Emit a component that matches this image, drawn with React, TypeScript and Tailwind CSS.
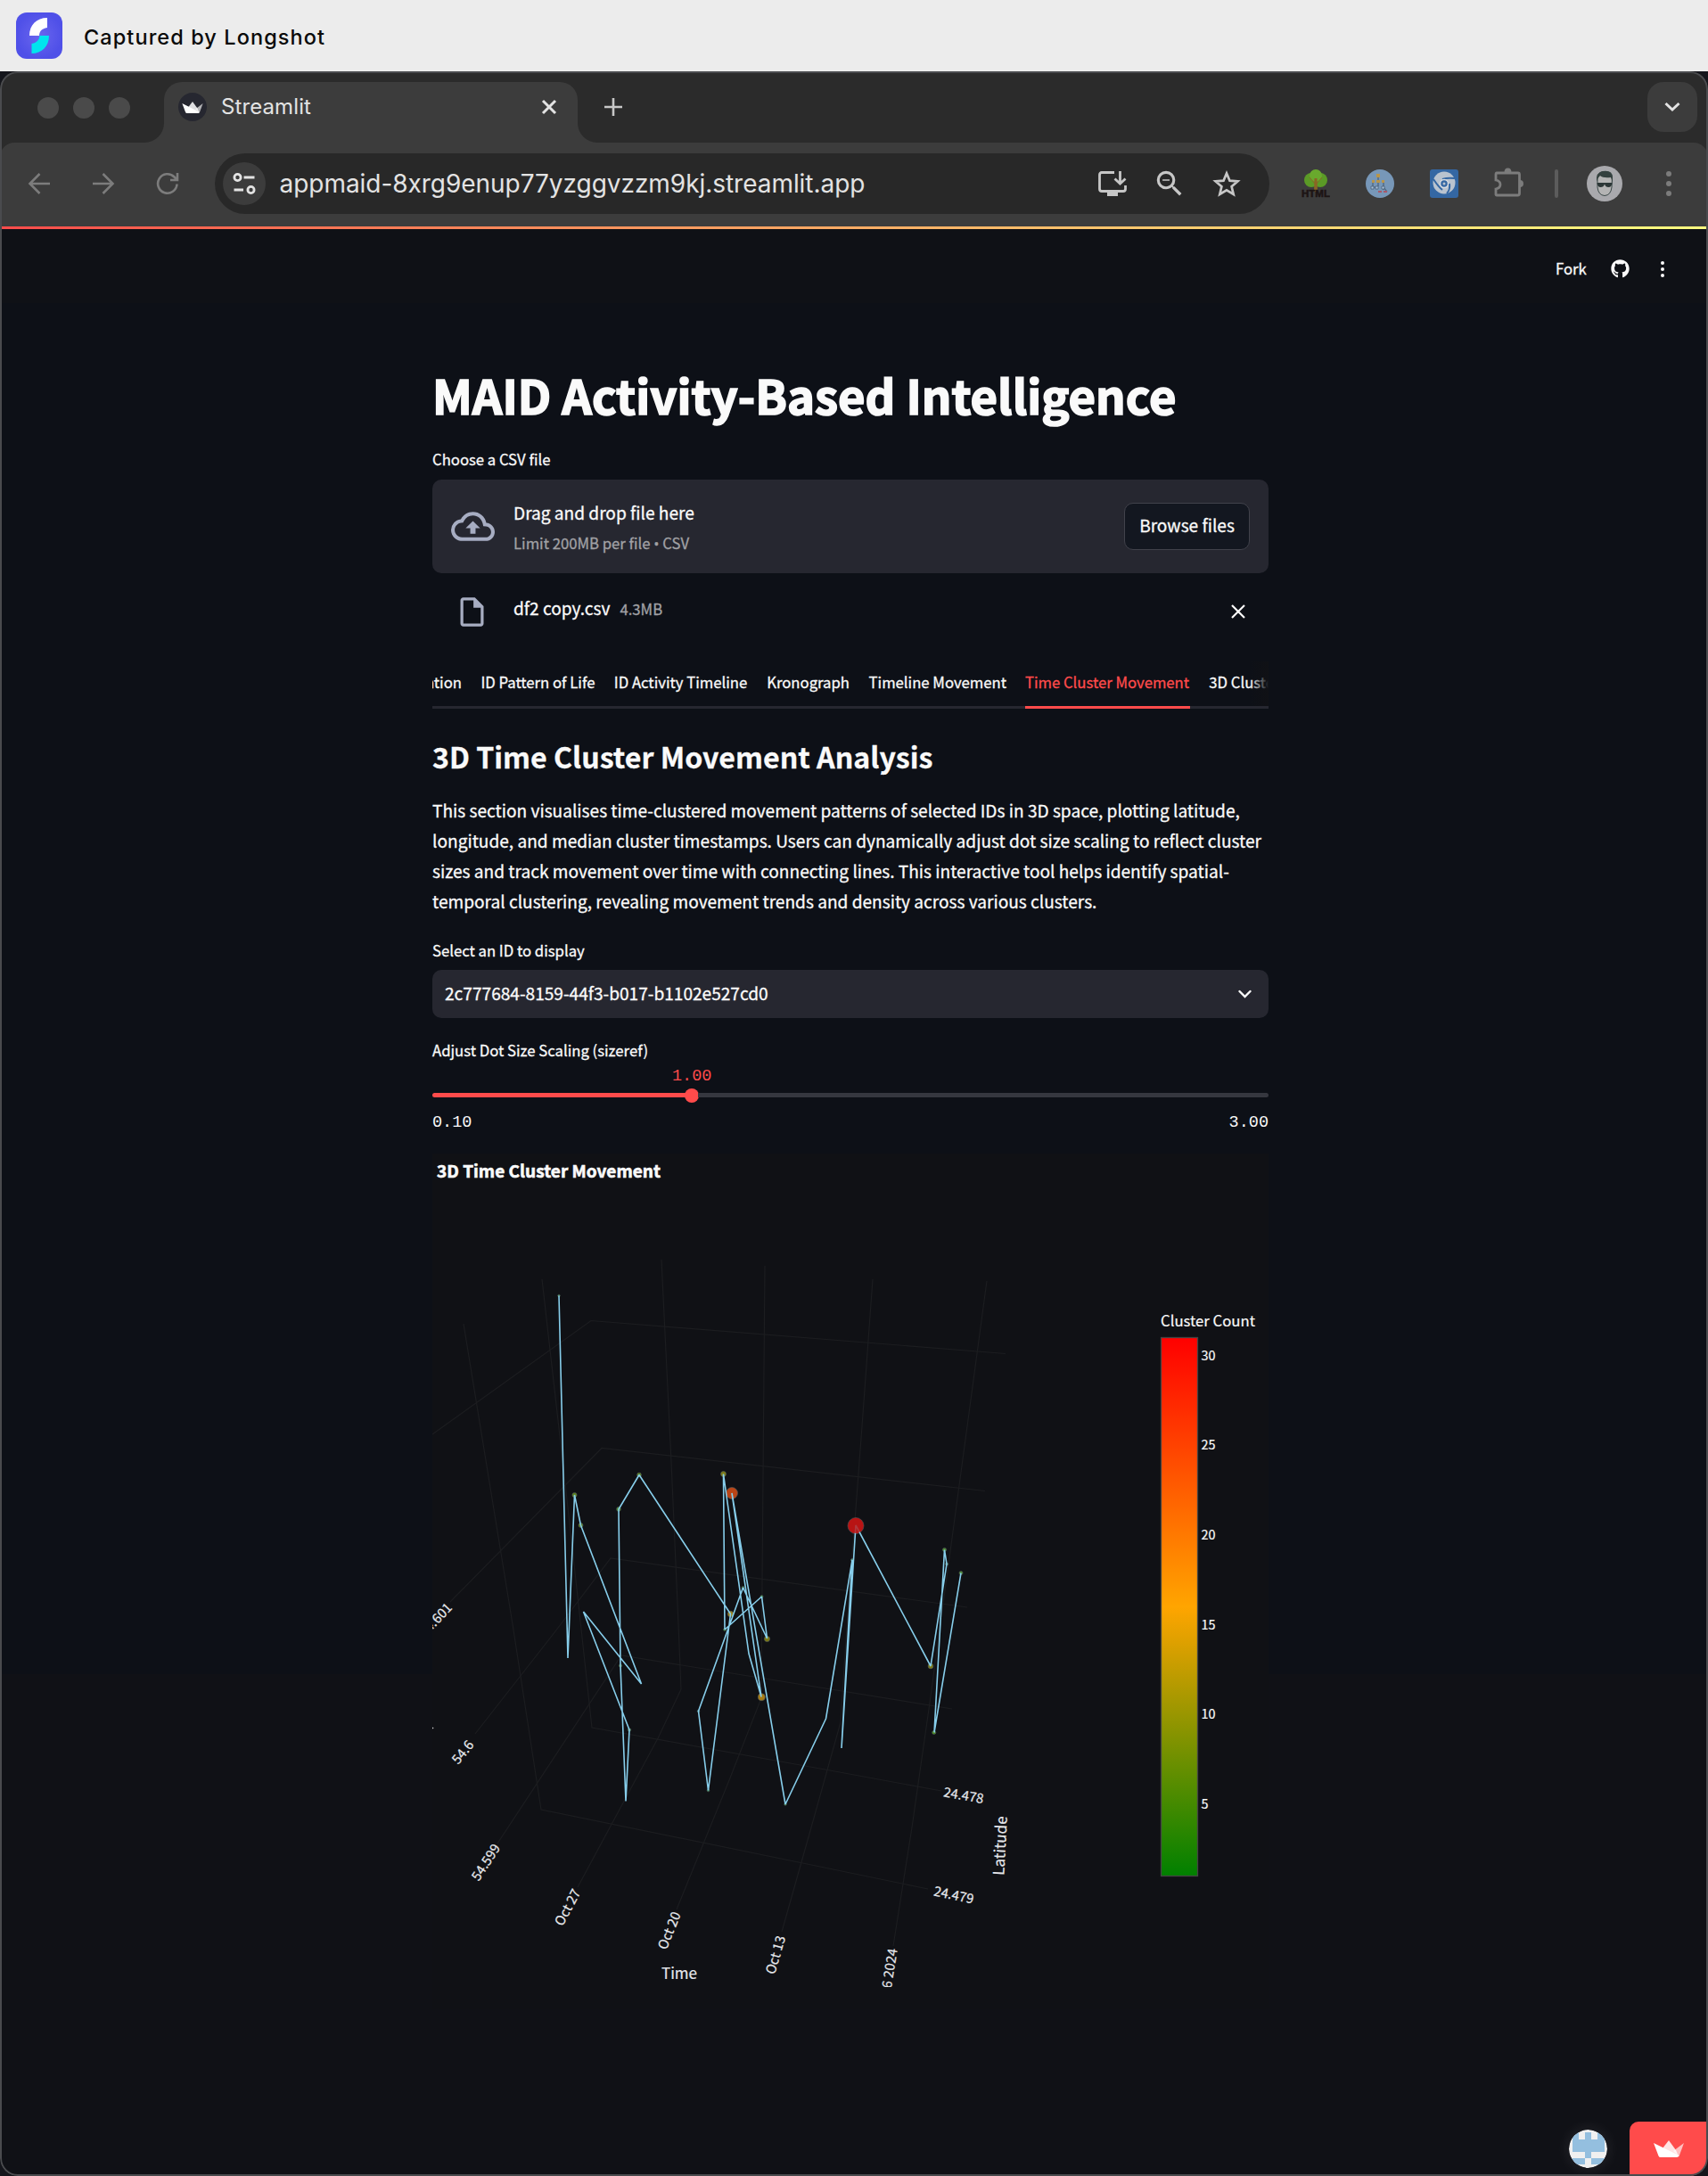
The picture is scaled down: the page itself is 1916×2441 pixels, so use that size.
import type { ReactNode } from "react";
import { MdOutlineCloudUpload, MdOutlineInsertDriveFile, MdZoomOut } from "react-icons/md";
import { FaGithub } from "react-icons/fa";

const SANS = "font-['Noto_Sans_CJK_SC','Noto_Sans',sans-serif]";
const MONO = "font-['Liberation_Mono',monospace] [-webkit-text-stroke-width:0]";

function Crown({ className }: { className: string }) {
  return (
    <svg viewBox="0 0 34 19" className={className}>
      <path d="M10 9 L17 0 L25 11 L28 18 Z" fill="#ffffff" opacity=".85" />
      <path d="M34 3 L28.5 18 L22 12 Z" fill="#ffffff" opacity=".65" />
      <path d="M0 3 L28.5 17 Q28 19 26 19 L8 19 Q6 19 5.500 17.500 Z" fill="#ffffff" />
    </svg>
  );
}

function LongshotBar() {
  return (
    <header className="flex h-20 items-center bg-[#ececec] pl-[18px]">
      <svg viewBox="0 0 52 52" className="h-[52px] w-[52px]">
        <defs>
          <radialGradient id="ls">
            <stop offset="0" stopColor="#6a66ee" />
            <stop offset="1" stopColor="#4f50e8" />
          </radialGradient>
        </defs>
        <rect width="52" height="52" rx="12" fill="url(#ls)" />
        <path d="M15 26 C15 14 23 6 35 6 L35 17 C29 18 26 21 26 26 Z" fill="#fff" />
        <path d="M37 26 C37 38 29 46 17.500 46 L17.500 35 C23 34 26 31 26.500 26 Z" fill="#00e5ee" />
      </svg>
      <span className="mt-[3px] ml-6 font-['Inter',sans-serif] text-[23.5px] leading-[30px] font-medium tracking-[1.08px] text-[#0a0a0a] whitespace-nowrap">
        Captured by Longshot
      </span>
    </header>
  );
}

function TabStrip() {
  return (
    <div className="flex h-20 items-end bg-[#2b2b2b]">
      <div className="flex h-20 w-[162px] items-center gap-4 pl-[42px]">
        <i className="mt-0.5 h-6 w-6 rounded-full bg-[#4a4a4a]" />
        <i className="mt-0.5 h-6 w-6 rounded-full bg-[#4a4a4a]" />
        <i className="mt-0.5 h-6 w-6 rounded-full bg-[#4a4a4a]" />
      </div>
      <div className="h-[22px] w-[22px] bg-[#3c3c3c]">
        <div className="h-full w-full rounded-br-[22px] bg-[#2b2b2b]" />
      </div>
      <div className="flex h-[68px] w-[464px] items-center rounded-t-[20px] bg-[#3c3c3c] pr-[23px] pb-3 pl-4">
        <div className="flex h-8 w-8 items-center justify-center rounded-full bg-[#262730]">
          <Crown className="h-[13px] w-6" />
        </div>
        <span className="ml-4 flex-1 font-['Inter',sans-serif] text-[24px] leading-8 tracking-[0.1px] text-[#e3e3e3]">Streamlit</span>
        <svg viewBox="0 0 18 18" className="h-[18px] w-[18px]" fill="none" stroke="#e3e3e3" strokeWidth="3">
          <path d="M2 2 L16 16 M16 2 L2 16" />
        </svg>
      </div>
      <div className="h-[22px] w-[22px] bg-[#3c3c3c]">
        <div className="h-full w-full rounded-bl-[22px] bg-[#2b2b2b]" />
      </div>
      <div className="flex h-20 flex-1 items-center justify-between pr-3 pl-2">
        <svg viewBox="0 0 20 20" className="h-5 w-5" stroke="#c7c7c7" strokeWidth="2.6">
          <path d="M10 0 V20 M0 10 H20" />
        </svg>
        <div className="flex h-14 w-14 items-center justify-center rounded-[18px] bg-[#3c3c3c]">
          <svg viewBox="0 0 18 12" className="h-3 w-[18px]" fill="none" stroke="#e3e3e3" strokeWidth="3">
            <path d="M1.500 2 L9 9 L16.500 2" />
          </svg>
        </div>
      </div>
    </div>
  );
}

function Cell({ w, children }: { w: string; children: ReactNode }) {
  return <div className={"flex shrink-0 items-center justify-center " + w}>{children}</div>;
}

function Toolbar() {
  return (
    <div className="bg-[#2b2b2b]">
      <div className="flex h-[94px] items-center rounded-t-2xl bg-[#3c3c3c] pb-0.5 pl-2">
        <Cell w="w-[72px]">
          <svg viewBox="0 0 26 26" className="h-[26px] w-[26px]" fill="none" stroke="#7c7c7c" strokeWidth="2.6">
            <path d="M25 13 H3 M13.500 2 L2.500 13 L13.500 24" />
          </svg>
        </Cell>
        <Cell w="w-[72px]">
          <svg viewBox="0 0 26 26" className="h-[26px] w-[26px]" fill="none" stroke="#7c7c7c" strokeWidth="2.6">
            <path d="M1 13 H23 M12.500 2 L23.500 13 L12.500 24" />
          </svg>
        </Cell>
        <Cell w="w-[72px]">
          <svg viewBox="0 0 26 26" className="h-[26px] w-[26px]" fill="none" stroke="#7c7c7c" strokeWidth="2.6">
            <path d="M23.500 13.500 A10.700 10.700 0 1 1 20.500 5.500 L23.500 8.500 M24 1 V9 H16" />
          </svg>
        </Cell>
        <div className="ml-[17px] flex h-[68px] w-[1183px] items-center rounded-full bg-[#282828] pr-4 pl-[9px]">
          <div className="flex h-12 w-12 items-center justify-center rounded-full bg-[#3c3c3c]">
            <svg viewBox="0 0 26 26" className="h-[26px] w-[26px]" fill="none" stroke="#e3e3e3" strokeWidth="2.8">
              <circle cx="5.500" cy="6" r="3.600" />
              <path d="M12.500 6 H24.500 M1.500 20 H12" />
              <circle cx="20.500" cy="20" r="3.600" />
            </svg>
          </div>
          <span className="ml-[15.5px] flex-1 font-['Inter',sans-serif] text-[28px] leading-9 tracking-[-0.04px] text-[#e3e3e3]">
            appmaid-8xrg9enup77yzggvzzm9kj.streamlit.app
          </span>
          <Cell w="w-16">
            <svg viewBox="0 0 32 28" className="h-7 w-8" fill="none" stroke="#c7c7c7" strokeWidth="2.8">
              <path d="M18 1.500 H4 Q1.500 1.500 1.500 4 V20 Q1.500 22.500 4 22.500 H28 Q30.500 22.500 30.500 20 V16 M24.500 0 V14 M18.500 8.500 L24.500 14 L30.500 8.500" />
              <path d="M10 26 H22" strokeWidth="4" />
            </svg>
          </Cell>
          <Cell w="w-16">
            <MdZoomOut className="h-[38px] w-[38px] text-[#c7c7c7]" />
          </Cell>
          <Cell w="w-16">
            <svg viewBox="0 0 32 30" className="h-[30px] w-8" fill="none" stroke="#c7c7c7" strokeWidth="2.7">
              <path d="M16 3.500 L19.500 11.700 L28.400 12.400 L21.600 18.300 L23.700 27 L16 22.400 L8.300 27 L10.400 18.300 L3.600 12.400 L12.500 11.700 Z" />
            </svg>
          </Cell>
        </div>
        <div className="ml-4 flex">
          <Cell w="w-[72px]">
            <svg viewBox="0 0 32 32" className="h-8 w-8">
              <circle cx="11" cy="12" r="8" fill="#5b9a26" />
              <circle cx="21" cy="12" r="8" fill="#5b9a26" />
              <circle cx="16" cy="7" r="7" fill="#69a92d" />
              <path d="M14.500 10 H17.500 L18 25 H14 Z" fill="#8a6524" />
              <path d="M9 9 L16 17 L23 9" stroke="#8a6524" fill="none" />
              <text x="0" y="31" fontSize="10.500" fontWeight="700" fontFamily="Liberation Sans" textLength="32" lengthAdjust="spacingAndGlyphs" fill="#1c1414" stroke="#1c1414" strokeWidth=".5">HTML</text>
            </svg>
          </Cell>
          <Cell w="w-[72px]">
            <svg viewBox="0 0 32 32" className="h-8 w-8">
              <circle cx="16" cy="16" r="16" fill="#7797b8" />
              <path d="M14 8 V12 M8 13 V19 M14 13 V19 M20 13 V23 M6 20 H11 M20 20 L24 25" stroke="#4a6078" strokeWidth="1.200" />
              <path d="M12 5 H16 V9 H12 Z M7 12 H10 V15 H7 Z M12 12 H16 V15 H12 Z M18 12 H21 V15 H18 Z" fill="#b8954a" />
              <path d="M6 19 H9 V22 H6 Z M11 19 H14 V22 H11 Z M18 19 H21 V22 H18 Z" fill="#a9c3dd" stroke="#4a6078" strokeWidth=".8" />
              <path d="M14 24 H18 V26 H14 Z M20 24 H24 V26 H20 Z" fill="#a8586a" />
            </svg>
          </Cell>
          <Cell w="w-[72px]">
            <svg viewBox="0 0 32 32" className="h-8 w-8">
              <rect width="32" height="32" rx="3" fill="#3467a3" />
              <circle cx="16" cy="15" r="12.500" fill="#b9c3cf" />
              <path d="M4 11 Q10 20 14 23 M28 10 Q20 9 14 11 M19 27 Q23 23 22 16" fill="none" stroke="#3467a3" strokeWidth="2" />
              <circle cx="16" cy="16" r="4.500" fill="#3467a3" stroke="#d6dbe1" strokeWidth="1.500" />
              <circle cx="16" cy="16" r="1.500" fill="#b9c3cf" />
            </svg>
          </Cell>
          <Cell w="w-[72px]">
            <svg viewBox="0 0 32 32" className="h-8 w-8 overflow-visible" fill="none" stroke="#7c7c7c" strokeWidth="2.8">
              <path d="M3 4 H27 Q28.500 4 28.500 6 V27 Q28.500 29 26.500 29 H3 Q2 29 2 28 V22 Q7 21 7 17 Q7 13 2 12 V6 Q2 4 3 4 Z" />
              <path d="M11.500 3.500 Q11.500 -1.500 15.500 -1.500 Q19.500 -1.500 19.500 3.500 Z M29 12 Q33 12 33 16 Q33 20 29 20 Z" fill="#7c7c7c" stroke="none" />
            </svg>
          </Cell>
        </div>
        <i className="ml-4 h-8 w-1 rounded-full bg-[#5c5c5c]" />
        <svg viewBox="0 0 40 40" className="ml-8 h-10 w-10">
          <circle cx="20" cy="20" r="20" fill="#a9a9ad" />
          <path d="M12 13 Q13 6 20 6.500 Q28 6 28.500 14 L28 24 Q27 33 20 33.500 Q13 33 12 24 Z" fill="#b4b4b4" stroke="#3b4848" strokeWidth="1" />
          <path d="M11 18 Q10 7 18 6 Q29 4.500 29 13 L29 19 L27 13 Q18 14 15 11 L12.500 14 Z" fill="#34413f" />
          <path d="M11.500 19 H28.500 Q28 24 24.500 24 Q21 24 20 20.500 Q19 24 15.500 24 Q12 24 11.500 19 Z" fill="#2b3636" />
        </svg>
        <svg viewBox="0 0 6 28" className="ml-[49px] h-7 w-1.5" fill="#7c7c7c">
          <circle cx="3" cy="3" r="3" />
          <circle cx="3" cy="14" r="3" />
          <circle cx="3" cy="25" r="3" />
        </svg>
      </div>
    </div>
  );
}

function AppHeader() {
  return (
    <div className="flex h-[83px] items-center bg-[#0f1116] pl-[1745px] pt-1.5">
      <span className="text-[16.7px] leading-6 w-[36px] text-[#fafafa] pb-0.5">Fork</span>
      <FaGithub className="ml-[26px] h-[21px] w-[21px] text-[#fafafa]" />
      <svg viewBox="0 0 4 18" className="ml-[35px] h-[18px] w-1" fill="#fafafa">
        <circle cx="2" cy="2" r="2" />
        <circle cx="2" cy="9" r="2" />
        <circle cx="2" cy="16" r="2" />
      </svg>
    </div>
  );
}

function Uploader() {
  return (
    <>
      <div className="mt-4 flex h-[105px] items-center rounded-[10px] bg-[#262730] pr-[21px] pl-[21px]">
        <MdOutlineCloudUpload className="h-[49px] w-[49px] shrink-0 text-[#a7adc2]" />
        <div className="ml-[21px] flex-1 pt-[3px]">
          <div className="text-[19.1px] leading-[34px] text-[#fafafa]">Drag and drop file here</div>
          <div className="text-[16.7px] leading-[35px] text-[#a1a1a5]">
            Limit 200MB per file <span className="font-['Open_Sans',sans-serif]">•</span> CSV
          </div>
        </div>
        <button className="h-[53px] w-[141px] rounded-[10px] border border-[#41424b] bg-[#131720] pb-[3px] text-[19.1px] leading-6 text-[#fafafa] whitespace-nowrap">
          Browse files
        </button>
      </div>
      <div className="flex h-[86px] items-center pr-[26px] pl-[25px]">
        <MdOutlineInsertDriveFile className="h-[39px] w-[39px] text-[#a7adc2]" />
        <span className="mb-[8px] ml-[27px] text-[19.1px] leading-8 text-[#fafafa]">df2 copy.csv</span>
        <span className="mb-[6px] ml-[11px] flex-1 text-[16.7px] leading-8 text-[#a1a1a5]">4.3MB</span>
        <svg viewBox="0 0 16 16" className="h-4 w-4" fill="none" stroke="#fafafa" strokeWidth="2.2">
          <path d="M1 1 L15 15 M15 1 L1 15" />
        </svg>
      </div>
    </>
  );
}

const TABS = [
  { label: "ation", w: "w-[33px] justify-end" },
  { label: "ID Pattern of Life", w: "w-[128px]" },
  { label: "ID Activity Timeline", w: "w-[150px]" },
  { label: "Kronograph", w: "w-[93px]" },
  { label: "Timeline Movement", w: "w-[154px]" },
  { label: "Time Cluster Movement", w: "w-[185px] border-b-3 border-[#ff4b4b] text-[#ff4b4b]" },
  { label: "3D Cluster", w: "w-[69px]" },
];

function Tabs() {
  return (
    <div className="relative flex h-[53px] gap-[21.4px] overflow-hidden text-[#fafafa] shadow-[inset_0_-3px_0_#262730]">
      {TABS.map((t) => (
        <div key={t.label} className={"flex h-[53px] shrink-0 text-[16.7px] leading-[46px] whitespace-nowrap " + t.w}>
          {t.label}
        </div>
      ))}
      <div className="absolute top-0 right-0 bottom-[3px] w-[21px] bg-linear-to-r from-[#101115]/0 to-[#101115]" />
    </div>
  );
}

const TRACK: [number, number][] = [
  [627, 1453.5], [637, 1860], [644.5, 1677], [651.5, 1711], [719.5, 1889], [654.5, 1808], [706, 1940.5], [702, 2020.500],
  [696, 1868.5], [694, 1693], [717, 1654.5], [819.5, 1810.5], [794.5, 2008.5], [783.5, 1919.5], [833.5, 1781], [860.5, 1838],
  [854.5, 1791], [813, 1828], [811.5, 1653.5], [840, 1855], [854, 1903.5], [821, 1675], [881, 2024], [926.5, 1928],
  [956, 1750], [944, 1961], [960, 1711], [1044, 1869], [1062, 1754.5], [1059.5, 1738.5], [1048, 1943.5], [1078, 1764.5],
];

const GRID: string[] = [
  "520,1485 575,1822 607,2030 920,2094 1041,2119",
  "608,1435 633,1655 649,1800 664,1938 920,1984 1056,2009",
  "742,1413 753,1640 761,1822 764,1895 738,1950 648,2117",
  "858,1420 855,1773 854,1905 818,1997 759,2142",
  "979,1435 967,1600 950,1825 943,1932 910,2050 877,2167",
  "1107,1437 1085,1600 1043,1910 1023,2050 1002,2183",
  "485,1609 663,1481.500 1128,1518.500",
  "505,1797 675,1624.500 1105,1672.500",
  "533,1945 623,1830 685,1748 1085,1803",
  "558,2068 697,1857 1068,1917",
];

const DOTS: [number, number, number, string][] = [
  [627, 1453.5, 1.3, "#4c8a4a"], [644.5, 1677, 2.6, "#5c801c"], [651.5, 1711, 2.5, "#5c801c"], [717, 1654.5, 2.4, "#5c801c"],
  [694, 1693, 2.4, "#4c8a2a"], [811.5, 1653.5, 3, "#7d7a14"], [821, 1675, 6.5, "#ba4516"], [819.5, 1810.5, 3.2, "#9c8018"],
  [833.5, 1781, 1.4, "#4c8a4a"], [854.5, 1791, 1.5, "#3c8a2a"], [813, 1828, 1.5, "#3c8a2a"], [860.5, 1838.500, 3.1, "#7d7a14"],
  [854.3, 1903.7, 4, "#a97c12"], [960, 1711.5, 9, "#b81414"], [1059.5, 1738.5, 2.1, "#4c8a2a"], [1062, 1754.5, 1.6, "#4c8a6a"],
  [1078, 1764.5, 2, "#4c8a2a"], [1044, 1869, 2.9, "#7d7a14"], [1047.7, 1943.5, 2.1, "#4c8a1c"], [706, 1940.5, 1.7, "#4c8a4a"],
  [696, 1868.5, 1.6, "#4c8a2a"], [794.5, 2008.5, 1.3, "#3c8a4a"], [881, 2024, 1.3, "#3c8a2a"], [956, 1750, 1.6, "#4c8a6a"],
  [783.5, 1919.5, 1.3, "#4c9a8a"],
];

const LABELS: [string, number, number, number][] = [
  ["54.601", 488.5, 1817, -46],
  ["54.6", 519, 1965.5, -51],
  ["54.599", 545, 2089, -57],
  ["Oct 27", 636.7, 2139.5, -62],
  ["Oct 20", 750.7, 2165.7, -68],
  ["Oct 13", 870, 2193, -74],
  ["6 2024", 998, 2208, -81],
  ["24.478", 1081, 2014, 10],
  ["24.479", 1070, 2125.7, 12],
];

const TICKS: [string, number][] = [
  ["30", 1521], ["25", 1621.3], ["20", 1722], ["15", 1823], ["10", 1923.3], ["5", 2024.3],
];

function Plot() {
  return (
    <svg viewBox="485 1294 938 960" className={"block h-[960px] w-[938px] " + SANS}>
      <defs>
        <linearGradient id="scale" x1="0" y1="1" x2="0" y2="0">
          <stop offset="0" stopColor="#008000" />
          <stop offset=".5" stopColor="#ffa500" />
          <stop offset="1" stopColor="#ff0000" />
        </linearGradient>
        <clipPath id="scene">
          <rect x="485" y="1350" width="938" height="879" />
        </clipPath>
      </defs>
      <rect x="485" y="1294" width="938" height="960" fill="#101115" />
      <text x="490" y="1321" fontSize="19" fontWeight="700" fill="#fafafa" stroke="#fafafa" strokeWidth=".6" textLength="251">3D Time Cluster Movement</text>
      <g clipPath="url(#scene)">
        <g fill="none" stroke="#1c1d20" strokeWidth="1.200">
          {GRID.map((g) => <polyline key={g} points={g} />)}
        </g>
        {DOTS.map(([x, y, r, c]) => (
          <circle key={x + "-" + y} cx={x} cy={y} r={r} fill={c} stroke="#4f5a5e" strokeWidth=".6" />
        ))}
        <polyline points={TRACK.map((p) => p.join(",")).join(" ")} fill="none" stroke="#87ceeb" strokeWidth="1.600" strokeLinejoin="bevel" />
        <circle cx="960" cy="1711.500" r="8.500" fill="#b81414" opacity=".8" />
        <circle cx="485.500" cy="1938.500" r=".8" fill="#dddddd" />
        <g fontSize="14.900" fill="#e6e8ec" stroke="#e6e8ec" strokeWidth=".2" textAnchor="middle">
          {LABELS.map(([t, x, y, a]) => (
            <text key={t} transform={`translate(${x} ${y}) rotate(${a})`} y="5.300">{t}</text>
          ))}
          <text x="762" y="2219.500" fontSize="17">Time</text>
          <text transform="translate(1122 2070.500) rotate(-87)" y="6" fontSize="17">Latitude</text>
        </g>
      </g>
      <g fill="#fafafa" stroke="#fafafa" strokeWidth=".2">
        <text x="1302" y="1488" fontSize="16.700" textLength="106">Cluster Count</text>
        {TICKS.map(([t, y]) => (
          <text key={t} x="1347.500" y={y + 5} fontSize="14.400">{t}</text>
        ))}
      </g>
      <rect x="1302.500" y="1500.500" width="41" height="604" fill="url(#scale)" stroke="#444444" strokeWidth="1.300" />
    </svg>
  );
}

function FloatingBadges() {
  return (
    <div className="absolute right-px bottom-0 flex items-end">
      <svg viewBox="0 0 43 43" className="mr-[25px] mb-[9px] h-[43px] w-[43px] rounded-full shadow-[0_0_14px_4px_rgba(255,255,255,0.06)]">
        <defs>
          <clipPath id="av"><circle cx="21.500" cy="21.500" r="21.500" /></clipPath>
        </defs>
        <g clipPath="url(#av)">
          <rect width="43" height="43" fill="#f0f0f0" />
          <path d="M4 3 H11 V11 H18 V3 H25 V11 H32 V3 H40 V25 H25 V32 H40 V39 H25 V32 H18 V39 H4 V32 H18 V25 H4 Z" fill="#94bfdf" />
        </g>
      </svg>
      <div className="flex h-[61px] w-[87px] items-start rounded-tl-[10px] rounded-br-[20px] bg-[#ff4b4b] pt-[21px] pl-[27px]">
        <Crown className="h-[19px] w-[34px]" />
      </div>
    </div>
  );
}

export default function App() {
  return (
    <div className="h-[2441px] w-[1916px] overflow-hidden bg-[#15161c]">
      <LongshotBar />
      <div className="relative h-[2361px] overflow-hidden rounded-[20px] bg-[#101116]">
        <TabStrip />
        <Toolbar />
        <div className="h-[3px] bg-linear-to-r from-[#ff4b4b] to-[#fffd80]" />
        <div className={"[-webkit-text-stroke-width:0.3px] " + SANS}>
          <AppHeader />
          <div className="h-[1538px] bg-[#0d1017]">
            <main className="ml-[485px] w-[938px] pt-[57px]">
              <h1 className="h-[90px] text-[52.500px] leading-[90px] font-bold tracking-[0.03px] text-[#fafafa] whitespace-nowrap [-webkit-text-stroke-width:1.7px]">
                MAID Activity-Based Intelligence
              </h1>
              <div className="mt-[13px] h-[22px] text-[16.7px] leading-[30px] text-[#fafafa]">Choose a CSV file</div>
              <Uploader />
              <div className="mt-[13px]"><Tabs /></div>
              <h2 className="mt-[25px] h-[56px] text-[32.15px] leading-[56px] font-bold text-[#fafafa] whitespace-nowrap">
                3D Time Cluster Movement Analysis
              </h2>
              <p className="mt-[16px] h-[137px] text-[19.1px] leading-[34.13px] text-[#fafafa] whitespace-nowrap">
                This section visualises time-clustered movement patterns of selected IDs in 3D space, plotting latitude,<br />
                longitude, and median cluster timestamps. Users can dynamically adjust dot size scaling to reflect cluster<br />
                sizes and track movement over time with connecting lines. This interactive tool helps identify spatial-<br />
                temporal clustering, revealing movement trends and density across various clusters.
              </p>
              <div className="mt-[22px] h-[30px] text-[16.7px] leading-[30px] text-[#fafafa]">Select an ID to display</div>
              <div className="mt-[7px] flex h-[54px] items-center justify-between rounded-[10px] bg-[#262730] pr-[19px] pl-3.5">
                <span className="pb-[3px] text-[19.1px] leading-[50px] text-[#fafafa]">2c777684-8159-44f3-b017-b1102e527cd0</span>
                <svg viewBox="0 0 15 10" className="h-2.5 w-[15px]" fill="none" stroke="#fafafa" strokeWidth="2.4" strokeLinecap="round">
                  <path d="M1.500 2 L7.500 8 L13.500 2" />
                </svg>
              </div>
              <div className="mt-[21px] h-[30px] text-[16.7px] leading-[30px] text-[#fafafa]">Adjust Dot Size Scaling (sizeref)</div>
              <div className={"mt-[3px] h-[22px] pl-[269px] text-[18.5px] leading-[23px] text-[#ff4b4b] " + MONO}>1.00</div>
              <div className="mt-[2.5px] flex h-4 items-center">
                <i className="h-[5px] w-[284px] rounded-l-full bg-[#ff4b4b]" />
                <i className="-ml-px h-4 w-4 rounded-full bg-[#ff4b4b]" />
                <i className="-ml-px h-[5px] flex-1 rounded-r-full bg-[#35373f]" />
              </div>
              <div className={"mt-[10.5px] flex h-[47px] justify-between text-[18.5px] leading-[25px] text-[#fafafa] " + MONO}>
                <span>0.10</span>
                <span>3.00</span>
              </div>
              <Plot />
            </main>
          </div>
        </div>
        <FloatingBadges />
        <div className="pointer-events-none absolute inset-0 rounded-[20px] border-2 border-[#4a4b4e]" />
      </div>
    </div>
  );
}
